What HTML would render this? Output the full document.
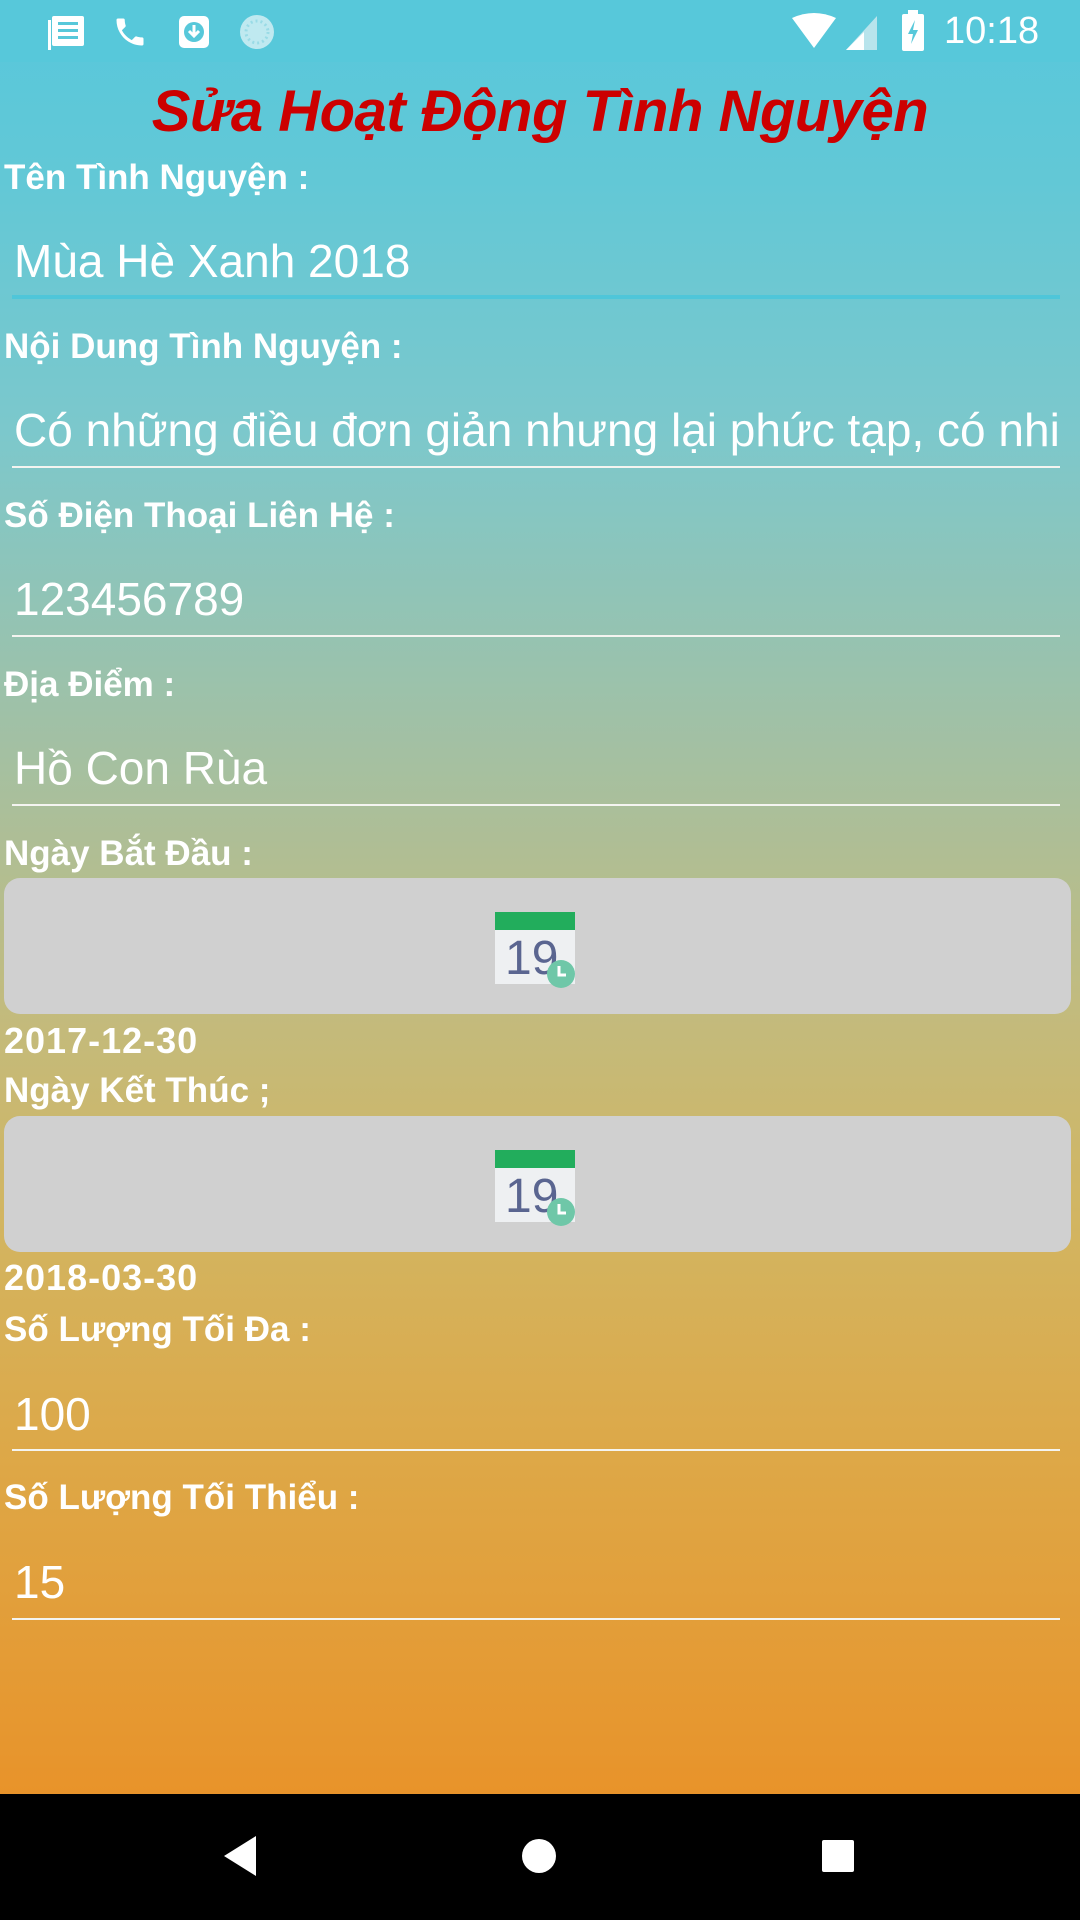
<!DOCTYPE html>
<html><head><meta charset="utf-8"><style>
*{margin:0;padding:0;box-sizing:border-box}
body{width:1080px;height:1920px;position:relative;overflow:hidden;font-family:"Liberation Sans",sans-serif;background:#000}
#bg{position:absolute;left:0;top:0;width:1080px;height:1794px;background:linear-gradient(180deg,#57c7dc 0%,#62c8d6 10%,#7cc8cc 24%,#a4c0a2 42%,#c2bb7e 56%,#d2b561 68%,#dea746 82%,#e8932a 100%)}
#sb{position:absolute;left:0;top:0;width:1080px;height:62px;background:#57c8da}
.a{position:absolute;color:#fff;white-space:nowrap}
.lbl{font-weight:bold;font-size:35px;left:4px;letter-spacing:0}
.dt{font-weight:bold;font-size:36px;left:4px;letter-spacing:1px}
.inp{font-size:46px;left:14px}
.ul{position:absolute;left:12px;width:1048px;height:2px;background:#f4f4f0}
.btn{position:absolute;left:4px;width:1067px;height:136px;background:#d0d0d0;border-radius:16px}
.cal{position:absolute;left:491px;top:26px;width:82px;height:84px}
</style></head><body>
<div id="bg"></div>
<div id="sb"></div>
<svg class="a" style="left:48px;top:12px" width="40" height="40" viewBox="0 0 40 40"><rect x="4" y="4" width="32" height="30" rx="2" fill="#fff"/><rect x="10" y="10" width="20" height="3" fill="#57c8da"/><rect x="10" y="17" width="20" height="3" fill="#57c8da"/><rect x="10" y="24" width="20" height="3" fill="#57c8da"/><rect x="0" y="8" width="3" height="30" fill="#fff"/></svg>
<svg class="a" style="left:112px;top:14px" width="36" height="36" viewBox="0 0 24 24"><path d="M6.6 10.8c1.4 2.8 3.8 5.1 6.6 6.6l2.2-2.2c.3-.3.7-.4 1-.2 1.1.4 2.300.6 3.6.6.6 0 1 .4 1 1V20c0 .6-.4 1-1 1C10.6 21 3 13.4 3 4c0-.6.4-1 1-1h3.5c.6 0 1 .4 1 1 0 1.300.2 2.500.6 3.600.1.3 0 .7-.2 1l-2.3 2.2z" fill="#fff"/></svg>
<svg class="a" style="left:177px;top:14px" width="34" height="36" viewBox="0 0 34 36"><rect x="2" y="2" width="30" height="32" rx="5" fill="#fff"/><circle cx="17" cy="18" r="10" fill="#57c8da"/><path d="M17 11v11M12 17l5 5 5-5" stroke="#fff" stroke-width="3" fill="none"/></svg>
<svg class="a" style="left:237px;top:12px" width="40" height="40"><circle cx="20" cy="20" r="17" fill="#bfe9f0"/><circle cx="20" cy="20" r="11" fill="none" stroke="#9adbe6" stroke-width="3" stroke-dasharray="2 3"/></svg>
<svg class="a" style="left:790px;top:12px" width="90" height="40"><path d="M2 6 Q24 -4 46 6 L24 36 Z" fill="#fff"/><path d="M87 4 L87 38 L56 38 Z" fill="#b8e4ec"/><path d="M74 20 L74 38 L56 38 Z" fill="#fff"/></svg>
<svg class="a" style="left:900px;top:10px" width="26" height="42"><rect x="8" y="0" width="10" height="5" fill="#fff"/><rect x="2" y="4" width="22" height="37" rx="2" fill="#fff"/><path d="M15 10 L8 24 L13 24 L11 34 L18 20 L13 20 Z" fill="#57c8da"/></svg>
<div class="a" style="left:944px;top:10px;font-size:38px">10:18</div>
<div class="a" style="left:0;width:1080px;text-align:center;top:78px;font-size:58px;font-weight:bold;font-style:italic;color:#cc0000;letter-spacing:-0.5px">Sửa Hoạt Động Tình Nguyện</div>

<div class="a lbl" style="top:158px">Tên Tình Nguyện :</div>
<div class="a inp" style="top:234px">Mùa Hè Xanh 2018</div>
<div class="ul" style="top:295px;height:4px;background:#4fc6d9"></div>

<div class="a lbl" style="top:327px">Nội Dung Tình Nguyện :</div>
<div class="a inp" style="top:403px;width:1046px;overflow:hidden">Có những điều đơn giản nhưng lại phức tạp, có nhiều</div>
<div class="ul" style="top:466px"></div>

<div class="a lbl" style="top:496px">Số Điện Thoại Liên Hệ :</div>
<div class="a inp" style="top:572px">123456789</div>
<div class="ul" style="top:635px"></div>

<div class="a lbl" style="top:665px">Địa Điểm :</div>
<div class="a inp" style="top:741px">Hồ Con Rùa</div>
<div class="ul" style="top:804px"></div>

<div class="a lbl" style="top:834px">Ngày Bắt Đầu :</div>
<div class="btn" style="top:878px"><svg class="cal" viewBox="0 0 82 84"><rect x="0" y="8" width="80" height="72" fill="#eef0f2"/><rect x="0" y="8" width="80" height="18" fill="#22ad5c"/><text x="10" y="70" font-family="Liberation Sans,sans-serif" font-size="48" fill="#5a6590">19</text><circle cx="66" cy="70" r="14" fill="#6fc7a8"/><path d="M64 62v9h7" stroke="#fff" stroke-width="3" fill="none"/></svg></div>
<div class="a dt" style="top:1020px">2017-12-30</div>

<div class="a lbl" style="top:1071px">Ngày Kết Thúc ;</div>
<div class="btn" style="top:1116px"><svg class="cal" viewBox="0 0 82 84"><rect x="0" y="8" width="80" height="72" fill="#eef0f2"/><rect x="0" y="8" width="80" height="18" fill="#22ad5c"/><text x="10" y="70" font-family="Liberation Sans,sans-serif" font-size="48" fill="#5a6590">19</text><circle cx="66" cy="70" r="14" fill="#6fc7a8"/><path d="M64 62v9h7" stroke="#fff" stroke-width="3" fill="none"/></svg></div>
<div class="a dt" style="top:1257px">2018-03-30</div>

<div class="a lbl" style="top:1310px">Số Lượng Tối Đa :</div>
<div class="a inp" style="top:1387px">100</div>
<div class="ul" style="top:1449px"></div>

<div class="a lbl" style="top:1478px">Số Lượng Tối Thiểu :</div>
<div class="a inp" style="top:1555px">15</div>
<div class="ul" style="top:1618px"></div>

<svg class="a" style="left:0;top:1794px" width="1080" height="126"><path d="M256 42 L256 82 L224 62 Z" fill="#fff"/><circle cx="539" cy="62" r="17" fill="#fff"/><rect x="822" y="46" width="32" height="32" rx="2" fill="#fff"/></svg>
</body></html>
